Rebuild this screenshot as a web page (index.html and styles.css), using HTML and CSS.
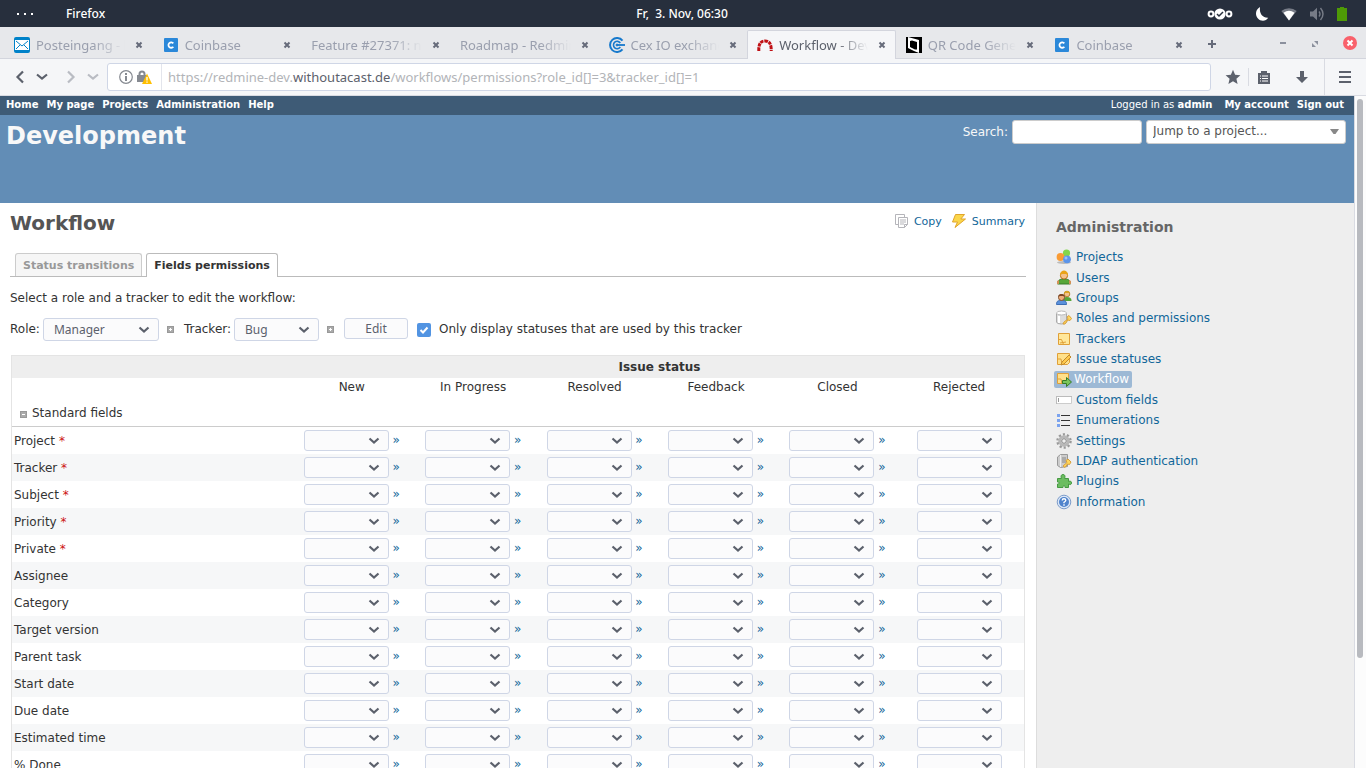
FILE: index.html
```html
<!DOCTYPE html>
<html lang="en">
<head>
    <meta charset="UTF-8">
    <title>Workflow - Development</title>
    <link rel="stylesheet" href="styles.css">
</head>
<body>
    <header class="desktop-bar">
        <div class="desktop-left">
            <span class="dots"><i></i><i></i><i></i></span>
            <span>Firefox</span>
        </div>
        <time>Fr,&nbsp; 3. Nov, 06:30</time>
        <div class="desktop-right">
            <svg class="cloud" width="26" height="14" viewBox="0 0 26 14" fill="none" stroke="#fff"><circle cx="13" cy="7" r="5.6" fill="#fff" stroke="none"/><circle cx="4" cy="7" r="2.4" stroke-width="2"/><circle cx="22" cy="7" r="2.4" stroke-width="2"/><path d="M10 7l2 2 4-4" stroke="#272f3d" stroke-width="1.5"/></svg>
            <svg width="14" height="14" viewBox="0 0 14 14"><path d="M5 0C2 2 1 4 1 6.500c0 4 3 7.200 7 7.200 2 0 4-1 5.200-3C8 11 4 7 5 0z" fill="#fff"/></svg>
            <svg width="16" height="14" viewBox="0 0 16 14"><path d="M8 13.500L.3 4A12 12 0 0 1 15.700 4z" fill="#777c87"/><path d="M8 13.500L2.500 5.800a9 9 0 0 1 11 0z" fill="#fff"/></svg>
            <svg width="16" height="14" viewBox="0 0 16 14"><path d="M1 4.500h3L8 .7v12.600L4 9.500H1z" fill="#777c87"/><path d="M10 4.500q2 2.500 0 5M11.500 1q5 6 0 12" fill="none" stroke="#777c87" stroke-width="1.400"/></svg>
            <svg width="10" height="14" viewBox="0 0 10 14"><path d="M0 1h3V0h4v1h3v13H0z" fill="#4e9a06"/></svg>
        </div>
    </header>

    <nav class="tab-strip">
        <div class="tabs-list">
            <div class="btab">
                <svg width="16" height="16" viewBox="0 0 16 16"><rect width="16" height="16" rx="2" fill="#0082c9"/><rect x="1" y="3" width="14" height="10" fill="#fff"/><path d="M2 4l6 5 6-5M2 12l4-4M14 12l-4-4" fill="none" stroke="#0082c9"/></svg>
                <span>Posteingang - bastian</span><button aria-label="Close tab"></button>
            </div>
            <div class="btab">
                <svg width="16" height="16" viewBox="0 0 16 16"><rect x="1" y="1" width="14" height="14" rx="1" fill="#2b88d9"/><path d="M10.300 6.400a2.700 2.700 0 1 0 0 3.300" fill="none" stroke="#fff" stroke-width="1.800"/></svg>
                <span>Coinbase</span><button aria-label="Close tab"></button>
            </div>
            <div class="btab"><span>Feature #27371: new option</span><button aria-label="Close tab"></button></div>
            <div class="btab"><span>Roadmap - Redmine</span><button aria-label="Close tab"></button></div>
            <div class="btab">
                <svg width="16" height="16" viewBox="0 0 16 16" fill="none" stroke="#1779cc"><path d="M13.500 3.600a7 7 0 1 0 0 8.800" stroke-width="2"/><path d="M11.300 6a3.700 3.700 0 1 0 0 4" stroke-width="1.600"/><path d="M8 8h8" stroke-width="1.800"/><circle cx="8" cy="8" r="1" fill="#1779cc"/></svg>
                <span>Cex IO exchange</span><button aria-label="Close tab"></button>
            </div>
            <div class="btab active">
                <svg width="16" height="16" viewBox="0 0 16 16"><path d="M1.800 14V12Q2 4 8 4t6.200 8v2" fill="none" stroke="#c01015" stroke-width="3" stroke-dasharray="3.400 .8"/></svg>
                <span>Workflow - Development</span><button aria-label="Close tab"></button>
            </div>
            <div class="btab">
                <svg width="16" height="16" viewBox="0 0 16 16"><path d="M0 0h16v16H0z"/><path d="M2 0l11 3v13L8 14l-6-3zM4 4v6l5 2.500h2V5L6 3.500z" fill="#fff" fill-rule="evenodd"/></svg>
                <span>QR Code Generator</span><button aria-label="Close tab"></button>
            </div>
            <div class="btab">
                <svg width="16" height="16" viewBox="0 0 16 16"><rect x="1" y="1" width="14" height="14" rx="1" fill="#2b88d9"/><path d="M10.300 6.400a2.700 2.700 0 1 0 0 3.300" fill="none" stroke="#fff" stroke-width="1.800"/></svg>
                <span>Coinbase</span><button aria-label="Close tab"></button>
            </div>
        </div>
        <div class="window-buttons">
            <button aria-label="New tab"><svg width="10" height="10" viewBox="0 0 10 10"><path d="M5 1v8M1 5h8" stroke="#666b7a" stroke-width="2"/></svg></button>
            <button class="min" aria-label="Minimize"><svg width="8" height="10" viewBox="0 0 8 10"><path d="M1 4h6" stroke="#8b909d" stroke-width="2"/></svg></button>
            <button aria-label="Restore"><svg width="8" height="10" viewBox="0 0 8 10"><path d="M3 2h4v4zM1 4v4h4z" fill="#8b909d"/></svg></button>
            <button aria-label="Close window"><svg width="14" height="16" viewBox="0 0 14 16"><circle cx="7" cy="7" r="7" fill="#f9616b"/><path d="M4.500 4.500l5 5M9.500 4.500l-5 5" stroke="#fff" stroke-width="2"/></svg></button>
        </div>
    </nav>

    <div class="toolbar">
        <div class="nav-buttons">
            <button aria-label="Back"><svg width="10" height="14" viewBox="0 0 10 14"><path d="M8 1.500L2.500 7 8 12.500" fill="none" stroke="#5c616c" stroke-width="2.200"/></svg></button>
            <button aria-label="Back history"><svg width="12" height="8" viewBox="0 0 12 8"><path d="M1 1.500l5 4 5-4" fill="none" stroke="#5c616c" stroke-width="2.200"/></svg></button>
            <button class="fwd" aria-label="Forward"><svg width="10" height="14" viewBox="0 0 10 14"><path d="M2 1.500L7.500 7 2 12.500" fill="none" stroke="#b9bcc3" stroke-width="2.200"/></svg></button>
            <button aria-label="Forward history"><svg width="12" height="8" viewBox="0 0 12 8"><path d="M1 1.500l5 4 5-4" fill="none" stroke="#b9bcc3" stroke-width="2.200"/></svg></button>
        </div>
        <div class="url-box">
            <div class="identity">
                <svg width="14" height="14" viewBox="0 0 14 14"><circle cx="7" cy="7" r="6.300" fill="none" stroke="#868a91" stroke-width="1.200"/><path d="M6 3h2v2H6zM6 6h2v5H6z" fill="#868a91"/></svg>
                <svg width="15" height="14" viewBox="0 0 15 14"><path d="M2.500 6V4a2.500 2.500 0 0 1 5 0v2" fill="none" stroke="#868a91" stroke-width="2"/><path d="M0 5h10v7H0z" fill="#868a91"/><path d="M10 3.500L15 14H5z" fill="#ffbf00"/><path d="M10 7v3.500M10 11.500v1.300" stroke="#fff" stroke-width="1.300"/></svg>
            </div>
            <div class="url">https://redmine-dev.<b>withoutacast.de</b>/workflows/permissions?role_id[]=3&amp;tracker_id[]=1</div>
        </div>
        <div class="tool-buttons">
            <button aria-label="Bookmark"><svg width="16" height="16" viewBox="0 0 16 16"><path d="M8 .8l2.100 4.900 5.300.5-4 3.500 1.200 5.200L8 12.200l-4.600 2.700 1.200-5.200-4-3.500 5.300-.5z" fill="#5c616c"/></svg></button>
            <i class="sep"></i>
            <button aria-label="Bookmarks list"><svg width="12" height="14" viewBox="0 0 12 14"><path d="M0 3h3V1h6v2h3v11H0z" fill="#5c616c"/><path d="M2 6h1M4 6h6M2 8.500h1M4 8.500h6M2 11h1M4 11h6" stroke="#fff"/></svg></button>
            <button class="down" aria-label="Downloads"><svg width="12" height="14" viewBox="0 0 12 14"><path d="M4 1h4v6h4l-6 6-6-6h4z" fill="#5c616c"/></svg></button>
            <i class="sep tall"></i>
            <button class="burger" aria-label="Menu"><svg width="12" height="14" viewBox="0 0 12 14"><path d="M0 2h12M0 7h12M0 12h12" stroke="#5c616c" stroke-width="2"/></svg></button>
        </div>
    </div>

    <div class="viewport">
        <div class="page">
            <div class="top-menu">
                <div><a href="#">Home</a><a href="#">My page</a><a href="#">Projects</a><a href="#">Administration</a><a href="#">Help</a></div>
                <div><span>Logged in as <a href="#">admin</a></span><a href="#">My account</a><a href="#">Sign out</a></div>
            </div>
            <div class="header">
                <h1>Development</h1>
                <form class="quick-search">
                    <label for="q">Search:</label>
                    <input type="text" id="q">
                    <select class="jump" aria-label="Jump to a project"><option>Jump to a project...</option></select>
                </form>
            </div>

            <div class="main">
                <div class="content">
                    <div class="title-row">
                        <h2>Workflow</h2>
                        <div class="contextual">
                            <a href="#"><svg width="14" height="16" viewBox="0 0 14 16" fill="#fff" stroke="#b5b5ba"><path d="M.5 1.500h9v10h-9z"/><path d="M3.500 4.500h9v7l-3 3h-6z"/><path d="M5 7h6M5 9h6M5 11h4M9.500 14.500v-3h3" fill="none"/></svg>Copy</a>
                            <a href="#"><svg width="16" height="16" viewBox="0 0 16 16"><path d="M4.500 1.500h9L9.800 6h4.700L4 14.500 6.500 9H1.500z" fill="#fbd64a" stroke="#e0a52c"/></svg>Summary</a>
                        </div>
                    </div>
                    <div class="tabs">
                        <a href="#">Status transitions</a>
                        <a href="#" class="selected">Fields permissions</a>
                    </div>

                    <p>Select a role and a tracker to edit the workflow:</p>
                    <form class="filter">
                        <label for="role">Role:</label>
                        <select id="role" class="role"><option>Manager</option></select>
                        <button type="button" class="toggle plus" aria-label="More roles"></button>
                        <label for="tracker">Tracker:</label>
                        <select id="tracker" class="tracker"><option>Bug</option></select>
                        <button type="button" class="toggle plus" aria-label="More trackers"></button>
                        <button type="button" class="edit">Edit</button>
                        <input type="checkbox" id="used" checked>
                        <label for="used">Only display statuses that are used by this tracker</label>
                    </form>

                    <table class="list">
                        <colgroup><col class="name"><col class="status" span="5"><col></colgroup>
                        <thead>
                            <tr><th></th><th colspan="6">Issue status</th></tr>
                            <tr class="statuses"><td></td><td>New</td><td>In Progress</td><td>Resolved</td><td>Feedback</td><td>Closed</td><td>Rejected</td></tr>
                        </thead>
                        <tbody id="fields">
                            <tr class="group"><td colspan="7"><button type="button" class="toggle" aria-label="Collapse"></button>Standard fields</td></tr>
                        </tbody>
                    </table>
                </div>

                <div class="sidebar">
                    <h3>Administration</h3>
                    <ul>
                        <li><a href="#"><svg viewBox="0 0 16 16"><ellipse cx="8" cy="13.500" rx="7" ry="1.500" fill="#bbb"/><circle cx="10.500" cy="4" r="3.600" fill="#83d64b"/><circle cx="4.500" cy="8" r="3.900" fill="#f99b35"/><circle cx="11" cy="10.300" r="3.900" fill="#5c95ea"/><circle cx="10" cy="9" r="1.500" fill="#9cc1f7"/></svg>Projects</a></li>
                        <li><a href="#"><svg viewBox="0 0 16 16"><path d="M1.500 14c0-4 2.500-5 6.500-5s6.500 1 6.500 5z" fill="#57a639" stroke="#3b7d2a"/><path d="M1 11l2-1v4H1zM13 10l2 1v3h-2z" fill="#d39157"/><circle cx="8" cy="5.500" r="3.600" fill="#f5c28c" stroke="#b7701d"/><path d="M4 7V4q1-3.500 4-3.500T12 4v3l-1-3H5z" fill="#e9a318"/></svg>Users</a></li>
                        <li><a href="#"><svg viewBox="0 0 16 16"><path d="M7 11c0-3 1-4 4-4s4.500 1 4.500 4z" fill="#57a639"/><circle cx="11" cy="4" r="2.800" fill="#f5c28c" stroke="#b78030"/><path d="M8 4q0-3 3-3t3 3l-1-1H9z" fill="#d9a524"/><path d="M.5 14.500c0-4 2-4 5-4s5 0 5 4z" fill="#5a91dc" stroke="#3c6db5"/><circle cx="5.500" cy="7.500" r="3" fill="#efad7b" stroke="#80502d"/><path d="M2 7.500Q2 4 5.500 4T9 7.500L8 6H3z" fill="#7c4522"/></svg>Groups</a></li>
                        <li><a href="#"><svg viewBox="0 0 16 16"><path d="M.5 3v9q0 2 5 2t5-2V3" fill="#ddd" stroke="#aaa"/><ellipse cx="5.500" cy="3" rx="5" ry="2" fill="#fff" stroke="#bbb"/><path d="M3 6v7" stroke="#fff" stroke-width="2"/><path d="M8 12l4-3-1-2 2-1.500 2.500 3-1.500 2-2-.5-3 4H7z" fill="#ffd75c" stroke="#d9a03a"/></svg>Roles and permissions</a></li>
                        <li><a href="#"><svg viewBox="0 0 16 16"><path d="M2.500 2.500h11v11h-11z" fill="#ffe79a" stroke="#e0a038"/><path d="M2.500 8.500h3l2 5M4 12l6-1" stroke="#e0a038" fill="none"/></svg>Trackers</a></li>
                        <li><a href="#"><svg viewBox="0 0 16 16"><path d="M1.500 2.500h12v9l-2 2h-10z" fill="#ffe08a" stroke="#e0a038"/><path d="M2 8h3l1 5" stroke="#e0a038" fill="none"/><path d="M6 11l7-7 2 2-7 7-3 1z" fill="#ffc94a" stroke="#c08a30"/></svg>Issue statuses</a></li>
                        <li><a href="#" class="selected"><svg viewBox="0 0 16 16"><path d="M1.500 2.500h11v10h-11z" fill="#ffe08a" stroke="#e0a038"/><path d="M2 8h3l1 5" stroke="#e0a038" fill="none"/><path d="M6.500 9.500h4v-3l5 4.500-5 4.500v-3h-4z" fill="#7ac55c" stroke="#367c2b"/></svg>Workflow</a></li>
                        <li><a href="#"><svg viewBox="0 0 16 16"><path d="M.5 4.500h15v7H.5z" fill="#fff" stroke="#ccc"/><path d="M0 4.500h16M.5 4v8" stroke="#bbb"/><path d="M2.500 6v4" stroke="#999"/></svg>Custom fields</a></li>
                        <li><a href="#"><svg viewBox="0 0 16 16"><path d="M1 2h3v3H1zM1 7h3v3H1zM1 12h3v3H1z" fill="#7ba3ee"/><path d="M5 3.500h9M5 8.500h9M5 13.500h9" stroke="#333"/></svg>Enumerations</a></li>
                        <li><a href="#"><svg viewBox="0 0 16 16"><circle cx="8" cy="8" r="6.500" fill="none" stroke="#999" stroke-width="2.500" stroke-dasharray="2.100 2"/><circle cx="8" cy="8" r="4.300" fill="#eee" stroke="#b8b8b8" stroke-width="3"/><circle cx="8" cy="8" r="2.300" fill="#eee" stroke="#888"/></svg>Settings</a></li>
                        <li><a href="#"><svg viewBox="0 0 16 16"><path d="M1.500 4l3-2.500h7v12l-7 1-3-2z" fill="#ccc" stroke="#999"/><path d="M4.500 2v12" stroke="#eee"/><path d="M6 5h4M6 7h4M6 9h4" stroke="#888"/><path d="M7 13l4-3.500-1-2L12 6l3 3-1.500 2.500-2-.5L9 14.500z" fill="#ffd75c" stroke="#d9a03a"/></svg>LDAP authentication</a></li>
                        <li><a href="#"><svg viewBox="0 0 16 16"><path d="M1.500 5.500h4c-1-2-.5-4 1.500-4s2.500 2 1.500 4h4v3c2-1 3 0 3 1.500s-1 2-3 1v3.500H9c1-2-3-2-2 0H1.500V11c2 .5 2-2.500 0-2z" fill="#6cbd61" stroke="#469a42"/></svg>Plugins</a></li>
                        <li><a href="#"><svg viewBox="0 0 16 16"><circle cx="8" cy="8" r="6.800" fill="#dbe7f7" stroke="#7d9cc9"/><circle cx="8" cy="8" r="5" fill="#4f83cc"/><path d="M6.200 6.500Q6.300 4.800 8 4.800t1.800 1.500Q9.800 7.300 8 8.300v1M8 10.300v1.500" fill="none" stroke="#fff" stroke-width="1.400"/></svg>Information</a></li>
                    </ul>
                </div>
            </div>
        </div>
        <div class="scrollbar"><div class="thumb"></div></div>
    </div>
    <script src="fields.js"></script>
</body>
</html>
```
FILE: styles.css
```css
*{
    box-sizing:border-box;
}

body{
    margin:0;
    height:100vh;
    display:flex;
    flex-direction:column;
    overflow:hidden;
    font:12px "DejaVu Sans",sans-serif;
    color:#333;
    background:#fff;
}

button{
    padding:0;
    border:0;
    background:none;
}

svg{
    display:block;
    flex:none;
}

a{
    color:#169;
    text-decoration:none;
}

/* desktop panel */
.desktop-bar{
    flex:none;
    height:27px;
    display:grid;
    grid-template-columns:1fr auto 1fr;
    align-items:center;
    padding:0 19px 0 17px;
    background:#272f3d;
    color:#fff;
    font:500 12px "Noto Sans",sans-serif;
}

.desktop-left,
.desktop-right{
    display:flex;
    align-items:center;
}

.desktop-left{
    gap:33px;
}

.desktop-right{
    justify-content:flex-end;
    gap:12px;
}

.cloud{
    margin-right:10px;
}

.dots{
    display:flex;
    gap:4px;
}

.dots i{
    width:2px;
    height:2px;
    background:#fff;
}

.dots i + i{
    margin-left:1px;
}

/* browser tabs */
.tab-strip{
    flex:none;
    display:flex;
    height:32px;
    padding-left:4px;
    background:#e7e8eb;
    box-shadow:inset 0 -1px #d3d5dd;
    font:13px "Noto Sans",sans-serif;
}

.tabs-list{
    flex:1;
    min-width:0;
    display:flex;
}

.btab{
    flex:1 1 0;
    min-width:0;
    display:flex;
    align-items:center;
    gap:6px;
    margin-top:3px;
    border:1px solid transparent;
    border-width:1px 1px 0;
    padding:0 9px 1px;
    color:#9a9fae;
}

.btab span{
    flex:1;
    min-width:0;
    overflow:hidden;
    white-space:nowrap;
    -webkit-mask-image:linear-gradient(to left,transparent,#000 32px);
    mask-image:linear-gradient(to left,transparent,#000 32px);
}

.btab button{
    flex:none;
    width:8px;
    height:8px;
    margin-left:4px;
    background:url("data:image/svg+xml,%3Csvg xmlns='http://www.w3.org/2000/svg' viewBox='0 0 8 8'%3E%3Cpath d='M1.500 1.500l5 5M6.500 1.500l-5 5' stroke='%23666b7a' stroke-width='2'/%3E%3C/svg%3E");
}

.btab.active{
    background:#f5f6f8;
    border-color:#d3d5dd;
    border-radius:2px 2px 0 0;
    color:#5c616c;
}

.window-buttons{
    flex:none;
    width:173px;
    display:flex;
    align-items:center;
    gap:24px;
    padding:2px 9px 0 14px;
}

.window-buttons .min{
    margin-left:auto;
}

/* toolbar */
.toolbar{
    flex:none;
    height:37px;
    display:flex;
    align-items:center;
    background:#f5f6f8;
    border-bottom:1px solid #d9dbe2;
}

.nav-buttons{
    display:flex;
    align-items:center;
    width:107px;
    gap:11px;
    padding-left:15px;
}

.nav-buttons .fwd{
    margin-left:7px;
}

.url-box{
    flex:1;
    height:28px;
    display:flex;
    align-items:center;
    border:1px solid #cfd6e6;
    border-radius:3px;
    background:#fff;
}

.identity{
    display:flex;
    align-items:center;
    gap:4px;
    height:26px;
    padding:0 9px 0 11px;
    border-right:1px solid #e3e5ec;
}

.url{
    padding-left:6px;
    font:13px "Noto Sans",sans-serif;
    color:#b2b4b8;
}

.url b{
    font-weight:400;
    color:#5c616c;
}

.tool-buttons{
    width:155px;
    display:flex;
    align-items:center;
    padding-left:14px;
}

.sep{
    width:1px;
    height:18px;
    margin:0 9px 0 7px;
    background:#d9dbe2;
}

.sep.tall{
    height:36px;
    margin:0 14px 0 16px;
}

.tool-buttons .down{
    margin-left:26px;
}

/* redmine */
.viewport{
    flex:1;
    min-height:0;
    display:flex;
}

.page{
    flex:1;
    min-width:0;
    display:flex;
    flex-direction:column;
    overflow:hidden;
}

.top-menu{
    flex:none;
    height:19px;
    display:flex;
    justify-content:space-between;
    padding:2px 10px 0 6px;
    background:#3e5b76;
    color:#fff;
    font-size:10px;
    line-height:14px;
}

.top-menu div{
    display:flex;
    gap:8px;
}

.top-menu a{
    color:#fff;
    font-weight:bold;
}

.top-menu span{
    margin-right:4px;
}

.header{
    flex:none;
    height:88px;
    display:flex;
    justify-content:space-between;
    align-items:flex-start;
    padding:5px 8px 0 6px;
    background:#628db6;
    color:#f8f8f8;
}

h1{
    margin:0;
    font-size:24px;
    line-height:32px;
}

.quick-search{
    display:flex;
    align-items:center;
    gap:4px;
}

.quick-search input,
.jump{
    height:24px;
    border:1px solid #ccc;
    border-radius:3px;
    background:#fff;
}

.quick-search input{
    width:130px;
}

select{
    appearance:none;
    margin:0;
}

.jump{
    width:200px;
    padding:0 6px 2px;
    color:#555;
    font:12px "DejaVu Sans",sans-serif;
    background:#fff url("data:image/svg+xml,%3Csvg xmlns='http://www.w3.org/2000/svg' width='9' height='6'%3E%3Cpath d='M0 0h9L5.500 5h-2z' fill='%23888'/%3E%3C/svg%3E") no-repeat right 6px center;
}

.main{
    flex:1;
    min-height:0;
    display:flex;
}

.content{
    flex:1;
    min-width:0;
    padding:8px 10px 0;
    overflow:hidden;
}

.title-row{
    display:flex;
    justify-content:space-between;
    align-items:flex-start;
}

h2{
    margin:0;
    font-size:20px;
    line-height:24px;
    color:#555;
}

.contextual{
    display:flex;
    gap:9px;
    padding:2px 1px 0 0;
    font-size:11px;
}

.contextual a{
    display:flex;
    align-items:center;
    gap:5px;
}

.tabs{
    display:flex;
    gap:4px;
    height:24px;
    margin-top:18px;
    padding-left:5px;
    box-shadow:inset 0 -1px #bbb;
    font-size:11px;
    font-weight:bold;
}

.tabs a{
    height:23px;
    padding:0 7px;
    border:1px solid #ccc;
    border-bottom:0;
    border-radius:3px 3px 0 0;
    background:#f6f6f6;
    color:#999;
    line-height:23px;
}

.tabs a.selected{
    height:24px;
    border-color:#bbb;
    background:#fff;
    color:#333;
}

p{
    margin:13px 0 12px;
    line-height:16px;
}

.filter{
    display:flex;
    align-items:center;
    height:23px;
}

.filter label{
    padding-bottom:2px;
}

.filter select,
.list select,
.edit{
    border:1px solid #cfd6e6;
    border-radius:3px;
    background-color:#fbfbfc;
    color:#5c616c;
    font:12px "Noto Sans",sans-serif;
}

.filter select,
.list select{
    background-image:url("data:image/svg+xml,%3Csvg xmlns='http://www.w3.org/2000/svg' width='12' height='8'%3E%3Cpath d='M1.500 1.500L6 5.500l4.500-4' fill='none' stroke='%235c616c' stroke-width='2.200'/%3E%3C/svg%3E");
    background-repeat:no-repeat;
    background-position:right 8px center;
}

.filter select{
    height:23px;
    margin:0 8px 0 3px;
    padding:0 10px;
}

.role{
    width:116px;
}

.tracker{
    width:85px;
}

.toggle{
    width:7px;
    height:7px;
    border:1px solid #999;
    background:linear-gradient(#fff,#fff) center/3px 1px no-repeat #aaa;
}

.toggle.plus{
    background:linear-gradient(#fff,#fff) center/3px 1px no-repeat,linear-gradient(#fff,#fff) center/1px 3px no-repeat #aaa;
}

.filter .toggle{
    margin-right:10px;
}

.edit{
    width:64px;
    height:21px;
    margin-bottom:2px;
    line-height:18px;
}

.filter input{
    appearance:none;
    width:14px;
    height:14px;
    margin:0 8px 0 9px;
    border-radius:2px;
    background:#5294e2 url("data:image/svg+xml,%3Csvg xmlns='http://www.w3.org/2000/svg' viewBox='0 0 14 14'%3E%3Cpath d='M3.500 7l2.500 2.500 4.500-5' fill='none' stroke='white' stroke-width='2'/%3E%3C/svg%3E");
}

.list{
    width:calc(100% - 2px);
    margin:14px 1px 0;
    table-layout:fixed;
    border-collapse:separate;
    border-spacing:0;
    border:1px solid #e4e4e4;
}

.name{
    width:279px;
}

.status{
    width:12%;
}

.list td{
    padding:0;
    text-align:center;
    white-space:nowrap;
}

.list tr > :last-child{
    padding-right:4px;
}

.list tr > th{
    height:22px;
    padding:0;
    background:#eee;
}

.list tr > th:last-child{
    padding:0 0 0 4px;
}

.list .statuses td{
    height:18px;
}

.list .group td{
    height:31px;
    padding:4px 0 0 8px;
    border-bottom:1px solid #ccc;
    text-align:left;
}

.group .toggle{
    margin-right:5px;
}

.field td{
    height:27px;
}

.field td:first-child{
    padding-left:2px;
    text-align:left;
}

.field:nth-child(odd){
    background:#f6f7f8;
}

.list select{
    width:85px;
    height:21px;
    vertical-align:middle;
}

.required{
    color:#c11;
}

.sidebar{
    width:318px;
    padding:15px 19px;
    border-left:1px solid #ddd;
    background:#eee;
}

h3{
    margin:0 0 11px;
    font-size:14px;
    line-height:18px;
    color:#666;
}

.sidebar ul{
    height:265px;
    display:grid;
    grid-auto-rows:1fr;
    align-items:center;
    justify-items:start;
    margin:0;
    padding:0;
    list-style:none;
}

.sidebar a{
    display:flex;
    align-items:center;
    gap:4px;
}

.sidebar svg{
    width:16px;
    height:16px;
}

.sidebar a.selected{
    gap:2px;
    margin-left:-2px;
    padding:0 3px 1px 2px;
    border-radius:2px;
    background:#9db9d5;
    color:#fff;
}

.scrollbar{
    flex:none;
    width:12px;
    padding:3px 2px;
    border-left:1px solid #d9dbe2;
    background:#fcfcfc;
}

.thumb{
    width:6px;
    height:84%;
    border-radius:3px;
    background:#b8babf;
}
```
FILE: fields.js
```js
var statuses = ['New', 'In Progress', 'Resolved', 'Feedback', 'Closed', 'Rejected'];
var fields = ['Project *', 'Tracker *', 'Subject *', 'Priority *', 'Private *', 'Assignee', 'Category',
    'Target version', 'Parent task', 'Start date', 'Due date', 'Estimated time', '% Done'];

var html = '';
fields.forEach(function (field) {
    html += '<tr class="field"><td>' + field.replace('*', '<span class="required">*</span>') + '</td>';
    statuses.forEach(function (status, i) {
        html += '<td><select aria-label="' + field + ' / ' + status + '">' +
            '<option></option><option>Read-only</option><option>Required</option></select>';
        // nothing to copy to after the last status
        if (i < statuses.length - 1) {
            html += ' <a href="#">»</a>';
        }
        html += '</td>';
    });
    html += '</tr>';
});
document.getElementById('fields').insertAdjacentHTML('beforeend', html);
```
